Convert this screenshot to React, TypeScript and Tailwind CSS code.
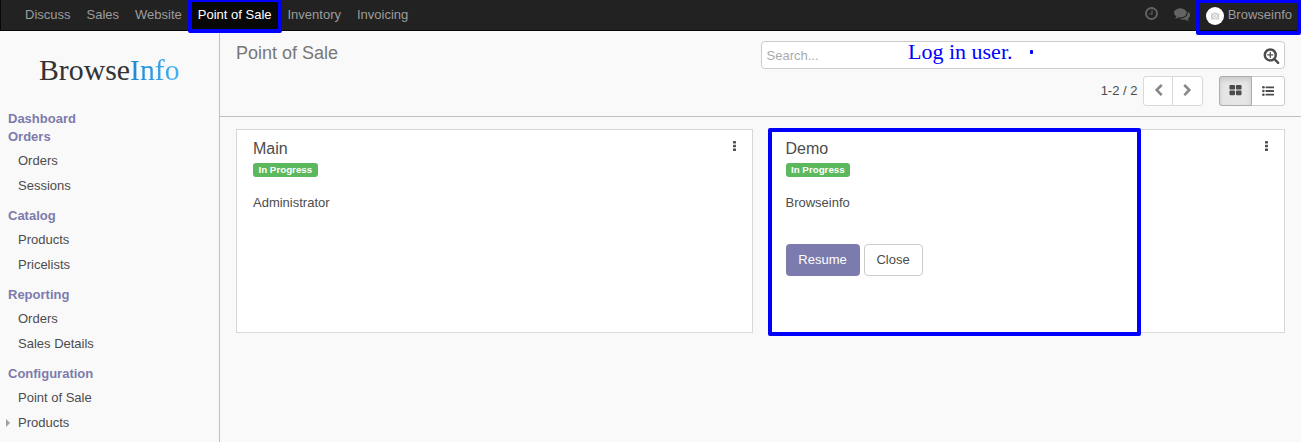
import React from "react";

type IconProps = { d: string; className?: string };

const Icon = ({ d, className }: IconProps) => (
  <svg viewBox="0 0 1792 1792" fill="currentColor" className={className} aria-hidden="true">
    <path d={d} />
  </svg>
);

const CLOCK =
  "M1024 544v448q0 14-9 23t-23 9h-320q-14 0-23-9t-9-23v-64q0-14 9-23t23-9h224v-352q0-14 9-23t23-9h64q14 0 23 9t9 23zm416 352q0-148-73-273t-198-198-273-73-273 73-198 198-73 273 73 273 198 198 273 73 273-73 198-198 73-273zm224 0q0 209-103 385.5t-279.5 279.5-385.5 103-385.5-103-279.5-279.5-103-385.5 103-385.5 279.5-279.5 385.5-103 385.5 103 279.5 279.5 103 385.5z";
const COMMENTS =
  "M1408 768q0 139-94 257t-256.5 186.5-353.5 68.5q-86 0-176-16-124 88-278 128-36 9-86 16h-3q-11 0-20.5-8t-11.5-21q-1-3-1-6.5t.5-6.5 2-6l2.5-5 3.5-5.5 4-5 4.5-5 4-4.5q5-6 23-25t26-29.5 22.5-29 25-38.5 20.5-44q-124-72-195-177t-71-224q0-139 94-257t256.5-186.5 353.5-68.5 353.5 68.5 256.5 186.5 94 257zm384 256q0 120-71 224.5t-195 176.5q10 24 20.5 44t25 38.5 22.5 29 26 29.5 23 25q1 1 4 4.5t4.5 5 4 5 3.5 5.5l2.5 5 2 6 .5 6.5-1 6.5q-3 14-13 22t-22 7q-50-7-86-16-154-40-278-128-90 16-176 16-271 0-472-132 58 4 88 4 161 0 309-45t264-129q125-92 192-212t67-254q0-77-23-152 129 71 204 178t75 230z";
const SEARCH_PLUS =
  "M1088 800v64q0 13-9.5 22.5t-22.5 9.5h-224v224q0 13-9.5 22.5t-22.5 9.5h-64q-13 0-22.5-9.5t-9.5-22.5v-224h-224q-13 0-22.5-9.5t-9.5-22.5v-64q0-13 9.5-22.5t22.5-9.5h224v-224q0-13 9.5-22.5t22.5-9.5h64q13 0 22.5 9.5t9.5 22.5v224h224q13 0 22.5 9.5t9.5 22.5zm128 32q0-185-131.5-316.5t-316.5-131.5-316.5 131.5-131.5 316.5 131.5 316.5 316.5 131.5 316.5-131.5 131.5-316.5zm512 832q0 53-37.5 90.5t-90.5 37.5q-54 0-90-38l-343-342q-179 124-399 124-143 0-273.5-55.5t-225-150-150-225-55.5-273.5 55.5-273.5 150-225 225-150 273.5-55.5 273.5 55.5 225 150 150 225 55.5 273.5q0 220-124 399l343 343q37 37 37 90z";
const CHEVRON_LEFT =
  "M1427 301l-531 531 531 531q19 19 19 45t-19 45l-166 166q-19 19-45 19t-45-19l-742-742q-19-19-19-45t19-45l742-742q19-19 45-19t45 19l166 166q19 19 19 45t-19 45z";
const CHEVRON_RIGHT =
  "M1363 877l-742 742q-19 19-45 19t-45-19l-166-166q-19-19-19-45t19-45l531-531-531-531q-19-19-19-45t19-45l166-166q19-19 45-19t45 19l742 742q19 19 19 45t-19 45z";
const TH_LARGE =
  "M832 1024v384q0 52-38 90t-90 38h-512q-52 0-90-38t-38-90v-384q0-52 38-90t90-38h512q52 0 90 38t38 90zm0-768v384q0 52-38 90t-90 38h-512q-52 0-90-38t-38-90v-384q0-52 38-90t90-38h512q52 0 90 38t38 90zm896 768v384q0 52-38 90t-90 38h-512q-52 0-90-38t-38-90v-384q0-52 38-90t90-38h512q52 0 90 38t38 90zm0-768v384q0 52-38 90t-90 38h-512q-52 0-90-38t-38-90v-384q0-52 38-90t90-38h512q52 0 90 38t38 90z";

const ListIcon = () => (
  <svg viewBox="0 0 12 10" fill="currentColor" className="mb-px h-[10px] w-3" aria-hidden="true">
    {[1.3, 5, 8.7].map((y) => (
      <g key={y}>
        <circle cx="1.4" cy={y} r="1.3" />
        <rect x="3.6" y={y - 0.9} width="8.4" height="1.8" rx="0.3" />
      </g>
    ))}
  </svg>
);

const KebabIcon = () => (
  <svg viewBox="0 0 3 10" fill="currentColor" className="h-[10px] w-[3px]" aria-hidden="true">
    {[0, 3.75, 7.5].map((y) => (
      <rect key={y} x="0" y={y} width="3" height="2.5" rx="0.4" />
    ))}
  </svg>
);

const Avatar = () => (
  <svg viewBox="0 0 18 18" className="mt-[2px] size-[18px]" aria-hidden="true">
    <circle cx="9" cy="9" r="9" fill="#fff" />
    <path d="M5 6.5h2l.8-1h2.6l.8 1h2v6H5z" fill="#cfcfcf" />
    <circle cx="9.1" cy="9.3" r="1.8" fill="none" stroke="#fff" strokeWidth=".8" />
    <path d="M4.5 5l9 8" stroke="#e4e4e4" strokeWidth=".7" />
  </svg>
);

const NAV = ["Discuss", "Sales", "Website", "Point of Sale", "Inventory", "Invoicing"];

const SECTIONS = [
  { title: "Orders", items: ["Orders", "Sessions"] },
  { title: "Catalog", items: ["Products", "Pricelists"] },
  { title: "Reporting", items: ["Orders", "Sales Details"] },
  { title: "Configuration", items: ["Point of Sale", "Products"] },
];

const TopBar = () => (
  <header className="flex h-[31px] justify-between border-b border-l border-[#080808] bg-[#222] text-[#9d9d9d]">
    <nav className="flex pl-4">
      {NAV.map((n) => (
        <a
          key={n}
          className={
            n === "Point of Sale"
              ? "bg-[#080808] px-2 leading-[30px] text-white"
              : "px-2 leading-[30px]"
          }
        >
          {n}
        </a>
      ))}
    </nav>
    <div className="flex items-start pr-[9px]">
      <Icon d={CLOCK} className="mt-[6px] mr-[15px] size-[15px] text-[#636363]" />
      <Icon d={COMMENTS} className="mt-[6px] mr-4 size-4 text-[#636363]" />
      <div className="flex gap-1 pt-[5px] leading-5">
        <Avatar />
        <span>Browseinfo</span>
      </div>
    </div>
  </header>
);

const Sidebar = () => (
  <aside className="w-[220px] shrink-0 border-r border-[#bfbfbf] leading-[18px]">
    <div className="h-[79px] pt-[21px] pl-[39px] font-['Liberation_Serif',serif] text-[29.8px] leading-[36px] whitespace-nowrap text-[#333]">
      Browse
      <span className="bg-linear-to-r from-[#1b87d3] to-[#42b4f7] bg-clip-text text-transparent">Info</span>
    </div>
    <div className="pl-2 font-bold text-[#7c7bad]">Dashboard</div>
    {SECTIONS.map((s) => (
      <section key={s.title} className="mb-[9px]">
        <h2 className="mb-[2px] pl-2 font-bold text-[#7c7bad]">{s.title}</h2>
        {s.items.map((item) => (
          <div key={item} className="flex h-[25px] items-center pl-[6px]">
            <span className="flex w-3">
              {s.title === "Configuration" && item === "Products" && (
                <svg viewBox="0 0 4 8" className="mt-px h-2 w-1" aria-hidden="true">
                  <path d="M0 0l4 4-4 4z" fill="#a0a0a0" />
                </svg>
              )}
            </span>
            {item}
          </div>
        ))}
      </section>
    ))}
  </aside>
);

const ControlPanel = () => (
  <div className="flex h-[86px] justify-between border-b border-[#bfbfbf] pr-4 pl-4">
    <h1 className="pt-[9px] text-[18px] leading-[26px] text-[#777]">Point of Sale</h1>
    <div className="flex w-[524px] flex-col pt-[10px]">
      <div className="flex h-7 items-center justify-between rounded border border-[#ccc] bg-white pr-[4px] pl-[4.5px]">
        <span className="pt-[2px] text-[#aaa]">Search...</span>
        <Icon d={SEARCH_PLUS} className="mt-px size-[17px]" />
      </div>
      <div className="mt-[7px] flex h-[30px] items-center justify-end">
        <span className="mr-[5.5px]">1-2 / 2</span>
        <div className="mr-4 flex h-[30px] w-[60px] rounded-[3px] border border-[#d9d9d9] bg-white text-[#888]">
          <button className="flex w-[29px] items-center justify-center border-r border-[#d9d9d9] pb-px">
            <Icon d={CHEVRON_LEFT} className="size-[13px]" />
          </button>
          <button className="flex flex-1 items-center justify-center pr-px pb-px">
            <Icon d={CHEVRON_RIGHT} className="size-[13px]" />
          </button>
        </div>
        <div className="flex h-[30px] w-[66px] rounded-[3px] border border-[#ccc] bg-white">
          <button className="-my-px -ml-px flex w-[33px] items-center justify-center rounded-l-[3px] border border-[#adadad] bg-[#e6e6e6] pb-px shadow-[inset_0_3px_5px_rgba(0,0,0,0.125)]">
            <Icon d={TH_LARGE} className="size-[13px]" />
          </button>
          <button className="flex flex-1 items-center justify-center">
            <ListIcon />
          </button>
        </div>
      </div>
    </div>
  </div>
);

type CardProps = { name: string; user: string; children?: React.ReactNode };

const Card = ({ name, user, children }: CardProps) => (
  <article className="flex h-[204px] min-w-0 flex-1 flex-col items-start border border-[#d8d8d8] bg-white pt-2 pr-4 pl-4">
    <div className="flex w-full justify-between">
      <h3 className="text-[16px] leading-[22px]">{name}</h3>
      <span className="pt-[3px]">
        <KebabIcon />
      </span>
    </div>
    <span className="mt-[3px] h-[14px] rounded-[3px] bg-[#5cb85c] px-[5.5px] text-[9.75px] leading-[14px] font-bold text-white">
      In Progress
    </span>
    <div className="mt-[16px] leading-[19px]">{user}</div>
    {children}
  </article>
);

export default function App() {
  return (
    <div className="relative flex h-[442px] w-[1301px] flex-col overflow-hidden bg-[#f9f9f9] font-['Liberation_Sans',Arial,sans-serif] text-[13px] text-[#4c4c4c]">
      <TopBar />
      <div className="flex min-h-0 flex-1">
        <Sidebar />
        <main className="min-w-0 flex-1">
          <ControlPanel />
          <div className="flex gap-4 px-4 pt-3">
            <Card name="Main" user="Administrator" />
            <Card name="Demo" user="Browseinfo">
              <div className="mt-[32px] flex gap-1">
                <button className="h-8 w-[74px] rounded bg-[#7c7bad] text-white">Resume</button>
                <button className="h-8 w-[59px] rounded border border-[#ccc] bg-white">Close</button>
              </div>
            </Card>
          </div>
        </main>
      </div>

      <div className="absolute -top-[2px] left-[188px] h-[35px] w-[94px] rounded-[2px] border-4 border-[#00f]" />
      <div className="absolute -top-px left-[1196px] h-[36px] w-[105px] rounded-[2px] border-4 border-[#00f]" />
      <div className="absolute top-[128px] left-[768px] h-[208px] w-[373px] rounded-[2px] border-4 border-[#00f]" />
      <div className="absolute top-[39px] left-[908px] font-['Liberation_Serif',serif] text-[22px] leading-[26px] whitespace-nowrap text-[#00f]">
        Log in user.
      </div>
      <div className="absolute top-[50px] left-[1030px] h-1 w-[3px] rounded-[1px] bg-[#00f]" />
    </div>
  );
}
